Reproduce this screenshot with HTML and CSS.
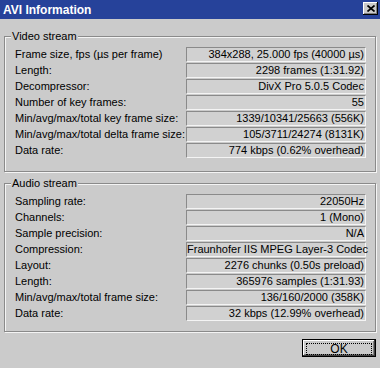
FILE: index.html
```html
<!DOCTYPE html>
<html lang="en">
<head>
  <meta charset="UTF-8">
  <title>AVI Information</title>
  <link rel="stylesheet" href="styles.css">
</head>
<body>

<div class="dialog">
  <div class="titlebar">
    <span class="title">AVI Information</span>
    <button class="close-btn"><svg width="8" height="7" viewBox="0 0 8 7"><path d="M0.5 0.5 L7.5 6.5 M7.5 0.5 L0.5 6.5" stroke="#000" stroke-width="1.7" fill="none"/></svg></button>
  </div>

  <div class="content">
    <fieldset class="group">
      <legend>Video stream</legend>
      <div class="row"><span class="label">Frame size, fps (µs per frame)</span><span class="value">384x288, 25.000 fps (40000 µs)</span></div>
      <div class="row"><span class="label">Length:</span><span class="value">2298 frames (1:31.92)</span></div>
      <div class="row"><span class="label">Decompressor:</span><span class="value">DivX Pro 5.0.5 Codec</span></div>
      <div class="row"><span class="label">Number of key frames:</span><span class="value">55</span></div>
      <div class="row"><span class="label">Min/avg/max/total key frame size:</span><span class="value">1339/10341/25663 (556K)</span></div>
      <div class="row"><span class="label">Min/avg/max/total delta frame size:</span><span class="value">105/3711/24274 (8131K)</span></div>
      <div class="row"><span class="label">Data rate:</span><span class="value">774 kbps (0.62% overhead)</span></div>
    </fieldset>

    <fieldset class="group audio">
      <legend>Audio stream</legend>
      <div class="row"><span class="label">Sampling rate:</span><span class="value">22050Hz</span></div>
      <div class="row"><span class="label">Channels:</span><span class="value">1 (Mono)</span></div>
      <div class="row"><span class="label">Sample precision:</span><span class="value">N/A</span></div>
      <div class="row"><span class="label">Compression:</span><span class="value">Fraunhofer IIS MPEG Layer-3 Codec</span></div>
      <div class="row"><span class="label">Layout:</span><span class="value">2276 chunks (0.50s preload)</span></div>
      <div class="row"><span class="label">Length:</span><span class="value">365976 samples (1:31.93)</span></div>
      <div class="row"><span class="label">Min/avg/max/total frame size:</span><span class="value">136/160/2000 (358K)</span></div>
      <div class="row"><span class="label">Data rate:</span><span class="value">32 kbps (12.99% overhead)</span></div>
    </fieldset>

    <div class="buttons">
      <button class="ok-btn"><span class="focus">OK</span></button>
    </div>
  </div>
</div>

</body>
</html>
```

FILE: styles.css
```css
body { margin: 0; background: #cbcbcb; font-family: "Liberation Sans", Arial, sans-serif; font-size: 11px; color: #000; }
.dialog { width: 380px; height: 368px; background: #cbcbcb; }

.titlebar { height: 19px; background: #26429a; display: flex; align-items: center; justify-content: space-between; padding: 0 2px 0 3px; }
.title { color: #fff; font-weight: bold; font-size: 12px; }
.close-btn { width: 15px; height: 13px; padding: 0; margin-top: -2px; background: #cbcbcb; border: none; display: flex; align-items: center; justify-content: center;
  box-shadow: inset -1px -1px #000, inset 1px 1px #fff, inset -2px -2px #808080; }
.close-btn svg { display: block; margin-top: -1px; }

.content { padding: 10px 4px 0 4px; }

.group { margin: 0; padding: 4px 9px 12px 10px; border: 1px solid #8a8a8a; box-shadow: inset 1px 1px #f4f4f4, 1px 1px #f4f4f4; min-width: 0; }
.group legend { padding: 0 1px; margin-left: -4px; line-height: 14px; background: #cbcbcb; }
.group.audio { margin-top: 4px; padding-bottom: 9px; }

.row { display: grid; grid-template-columns: 1fr 180px; height: 16px; align-items: start; }
.label { line-height: 15px; white-space: nowrap; }
.value { height: 15px; box-sizing: border-box; line-height: 13px; text-align: right; padding-right: 1px; white-space: nowrap;
  background: #d1d1d1; border-top: 1px solid #8a8a8a; border-left: 1px solid #8a8a8a; border-bottom: 1px solid #f4f4f4; border-right: 1px solid #f4f4f4; }

.buttons { display: flex; justify-content: flex-end; padding: 7px 0 0 0; }
.ok-btn { width: 74px; height: 18px; padding: 3px; background: #cbcbcb; border: 1px solid #000; font: inherit; font-size: 12px;
  box-shadow: inset -1px -1px #404040, inset 1px 1px #fff, inset -2px -2px #808080; }
.focus { display: block; height: 10px; line-height: 10px; border: 1px dotted #000; }
```
